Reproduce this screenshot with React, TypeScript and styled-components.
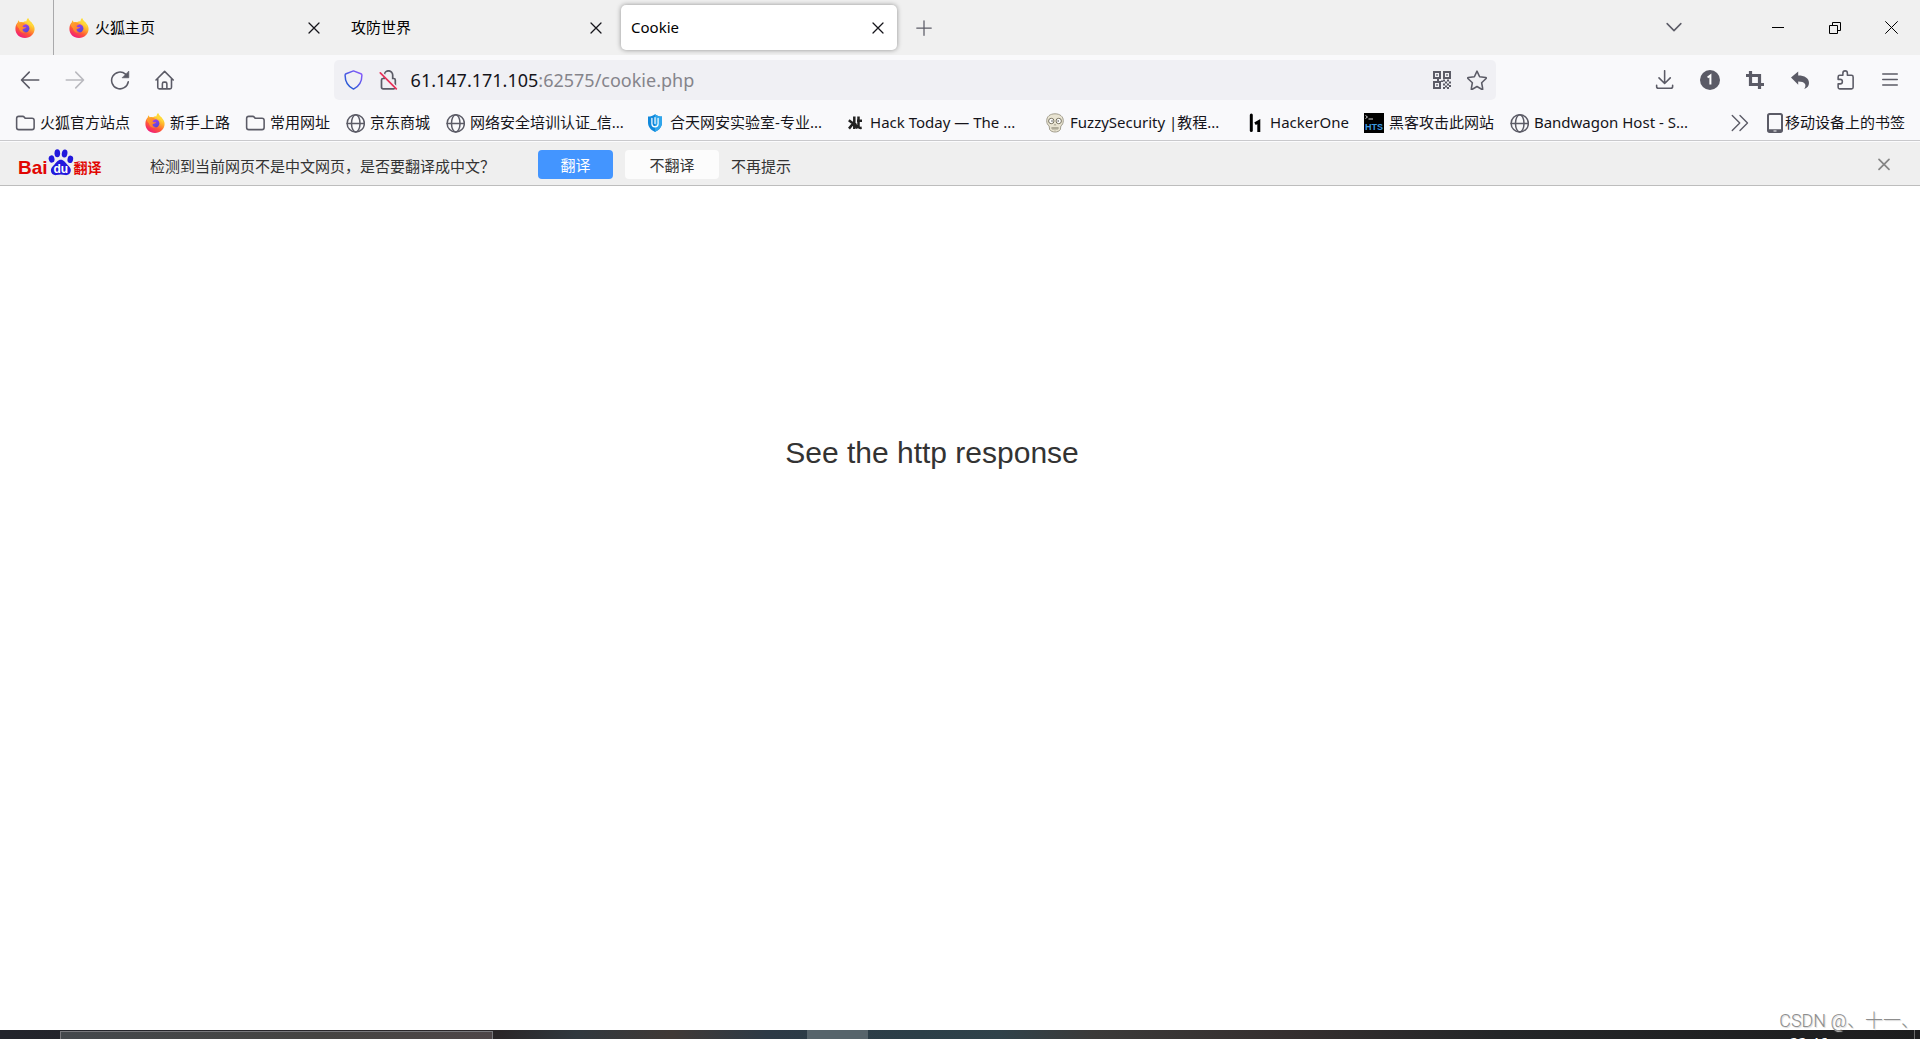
import React, { useState } from 'react';
import styled, { createGlobalStyle } from 'styled-components';

const UI_FONT = '"Noto Sans", "Noto Sans CJK SC", sans-serif';
const INK = '#15141a';
const ICON = '#5b5b66';

const GlobalStyle = createGlobalStyle`
  *, *::before, *::after { box-sizing: border-box; }
  body { margin: 0; overflow: hidden; background: #fff; font-family: ${UI_FONT}; font-size: 15px; color: ${INK}; }
  button, input { font: inherit; color: inherit; border: 0; padding: 0; margin: 0; background: none; }
  svg { display: block; flex: none; }
`;

const Window = styled.div`
  display: flex;
  flex-direction: column;
  height: 100vh;
`;

/* ---------- tab strip ---------- */

const TabStrip = styled.header`
  display: flex;
  align-items: stretch;
  height: 55px;
  background: #f0f0f0;
`;

const FirefoxView = styled.button`
  display: flex;
  align-items: center;
  padding: 0 18px 0 15px;
  border-right: 1px solid #a9a9ab;
`;

const Tab = styled.div<{ $active?: boolean }>`
  display: flex;
  align-items: center;
  flex: 0 1 276px;
  margin: 5px 3px;
  padding: 0 4px 0 ${p => (p.$active ? 10 : 12)}px;
  gap: 6px;
  border-radius: 5px;
  color: #000;
  background: ${p => (p.$active ? '#fff' : 'transparent')};
  box-shadow: ${p => (p.$active ? '0 0 5px rgba(0, 0, 0, 0.4)' : 'none')};
`;

const TabTitle = styled.span`
  flex: 1;
  padding-bottom: 2px;
  line-height: 22px;
  white-space: nowrap;
  overflow: hidden;
`;

const IconButton = styled.button<{ $w?: number; $dim?: boolean }>`
  display: flex;
  align-items: center;
  justify-content: center;
  flex: none;
  width: ${p => p.$w ?? 40}px;
  height: 40px;
  color: ${ICON};
  opacity: ${p => (p.$dim ? 0.4 : 1)};
`;

const TabClose = styled(IconButton)`
  height: 30px;
  color: ${INK};
`;

const NewTab = styled(IconButton)`
  align-self: center;
  margin-left: 4px;
`;

const WindowControls = styled.div`
  display: flex;
  align-items: center;
  margin-left: auto;
`;

const AllTabs = styled(IconButton)`
  margin-right: 55px;
`;

const CaptionButton = styled(IconButton)`
  color: #000;
`;

/* ---------- navigation bar ---------- */

const NavBar = styled.nav`
  display: flex;
  align-items: center;
  height: 50px;
  padding: 0 10px;
  background: #f9f9fb;
`;

const ButtonGroup = styled.div`
  display: flex;
  gap: 5px;
`;

const Spring = styled.div`
  flex: 149 1 0;
`;

const UrlBar = styled.form`
  display: flex;
  align-items: center;
  flex: 1162 1 0;
  height: 40px;
  padding: 0 2px;
  border-radius: 5px;
  background: #f0f0f4;
  font-size: 18px;
`;

const UrlText = styled.label`
  padding-left: 5px;
  line-height: 26px;
  color: #85848b;
  cursor: text;
`;

const UrlHost = styled.span`
  color: ${INK};
`;

const UrlInput = styled.input`
  flex: 1;
  min-width: 0;
  padding-left: 5px;
  outline: none;
`;

/* ---------- bookmarks ---------- */

const BookmarksBar = styled.div`
  display: flex;
  align-items: center;
  gap: 15px;
  height: 36px;
  padding: 0 15px;
  background: #f9f9fb;
  border-bottom: 1px solid #c9c9cc;
`;

const BookmarksShell = styled.div`
  background: #f9f9fb;
  border-bottom: 1px solid #fbfbfd;
`;

const Bookmark = styled.a<{ $tight?: boolean }>`
  display: flex;
  align-items: center;
  flex: none;
  gap: ${p => (p.$tight ? 0 : 5)}px;
  line-height: 22px;
  color: ${ICON};
  text-decoration: none;
  white-space: nowrap;
`;

const BookmarkTitle = styled.span<{ $clipped?: boolean }>`
  width: ${p => (p.$clipped ? '160px' : 'auto')};
  padding-bottom: 2px;
  color: ${INK};
`;

const Overflow = styled(IconButton)`
  height: 30px;
  margin-left: auto;
`;

/* ---------- translation bar ---------- */

const TranslateBar = styled.section`
  display: flex;
  align-items: center;
  height: 44px;
  padding: 2px 18px 0;
  background: #efefef;
  border-bottom: 1px solid #bdbdbd;
  color: #333;
  line-height: 22px;
`;

const Logo = styled.div`
  display: flex;
  align-items: flex-end;
  width: 132px;
  height: 28px;
  padding-bottom: 3px;
  color: #e10602;
  font-weight: 700;
  white-space: nowrap;
`;

const LogoLatin = styled.span`
  font: 700 19px/16px "Liberation Sans", sans-serif;
`;

const LogoHan = styled.span`
  font-size: 14px;
  line-height: 16px;
`;

const Question = styled.p`
  width: 388px;
  margin: 0;
  padding-top: 2px;
`;

const Choice = styled.button<{ $primary?: boolean }>`
  width: ${p => (p.$primary ? 75 : 94)}px;
  height: 29px;
  margin-right: 12px;
  border-radius: 4px;
  background: ${p => (p.$primary ? '#4395ff' : '#fcfcfc')};
  color: ${p => (p.$primary ? '#fff' : '#333')};
`;

const Never = styled.button`
  padding-top: 2px;
`;

const Dismiss = styled(IconButton)`
  margin-left: auto;
  margin-right: -2px;
  color: #858585;
`;

/* ---------- page ---------- */

const Page = styled.main`
  position: relative;
  flex: 1;
  padding: 248px 56px 0 0;
  background: #fff;
  text-align: center;
`;

const Message = styled.h1`
  margin: 0;
  font: 400 30px/38px "Liberation Sans", Arial, sans-serif;
  color: #333;
`;

const Watermark = styled.span`
  position: absolute;
  right: 1px;
  bottom: -3px;
  font: 300 18px/24px Roboto, "Noto Sans CJK SC", sans-serif;
  color: #8d8d8d;
  text-shadow: 1px 1px 1px #d8d8d8;
`;

const Taskbar = styled.footer`
  display: flex;
  flex: none;
  height: 9px;
  overflow: hidden;
  background: linear-gradient(90deg, #22242b 0, #2a2628 26%, #30383e 30%, #403936 35%, #2d3a46 40%, #2c3f48 48%, #30424a 52%, #3b3a39 57%, #352f2f 67%, #242628 78%, #1d1d1e 100%);
`;

const SearchBox = styled.div`
  width: 433px;
  height: 40px;
  margin: 1px 0 0 60px;
  border: 1px solid #78787c;
  background: linear-gradient(90deg, #44484c, #454442 60%, #4e4648);
`;

const RunningApp = styled.div`
  width: 61px;
  margin-left: 314px;
  background: #57646b;
`;

const Clock = styled.time`
  margin: 2px 0 0 auto;
  padding-right: 86px;
  font-size: 15px;
  line-height: 20px;
  color: #fff;
`;

const DesktopEdge = styled.div`
  width: 6px;
  border-left: 1px solid #6b6b6b;
`;

/* ---------- icons ---------- */

type StrokeProps = { children: React.ReactNode; size?: number; w?: number };

const Stroke = ({ children, size = 20, w = 1.25 }: StrokeProps) => (
  <svg width={size} height={size} viewBox="0 0 16 16" fill="none" stroke="currentColor" strokeWidth={w} strokeLinecap="round" strokeLinejoin="round" aria-hidden="true">
    {children}
  </svg>
);

const FirefoxLogo = () => (
  <svg width="20" height="20" viewBox="0 0 20 20" aria-hidden="true">
    <defs>
      <linearGradient id="fx-body" x1="0.8" y1="0.1" x2="0.3" y2="1">
        <stop offset="0" stopColor="#fff04a" />
        <stop offset="0.35" stopColor="#ffb42c" />
        <stop offset="0.65" stopColor="#ff5a36" />
        <stop offset="1" stopColor="#f0187c" />
      </linearGradient>
      <linearGradient id="fx-globe" x1="0.2" y1="0" x2="0.7" y2="1">
        <stop offset="0" stopColor="#a53df2" />
        <stop offset="1" stopColor="#5148d6" />
      </linearGradient>
      <linearGradient id="fx-head" x1="0" y1="0" x2="1" y2="1">
        <stop offset="0" stopColor="#ffa52b" />
        <stop offset="1" stopColor="#ff7130" />
      </linearGradient>
    </defs>
    <path fill="url(#fx-body)" d="M13.200.2c.4 2 1.900 2.900 3.100 4.200.4-.2.6.4.8.9 1.500 1.500 2.500 3.400 2.500 5.700 0 5-4.200 8.900-9.600 8.900C4.500 19.900.400 16 .400 10.900c0-2.600.8-5 2.300-6.500.1-.9.500-1.700 1.100-2.200.1.900.500 1.600 1.100 2 1.100-.300 2.100-.2 3 .1 1-.9 2.300-1.300 3.800-1.100-.100-1.200.400-2.400 1.500-3z" />
    <circle cx="10.200" cy="10.400" r="4.200" fill="url(#fx-globe)" />
    <path fill="url(#fx-head)" d="M1.800 7c1.200-2.200 3.600-3 6-2.200 1 .1 1.700.6 2.300 1.200-.6 1.200-1.700 1.400-2.600 1.900.2 1.200 1.700 1.500 3.700 1.200-.8 1.800-2.400 1.500-3.600 2.200-.3 1.800 1.600 3 3.600 2.600-2.700 1.900-6.900 0-7.300-3.700-.6-.3-1.600-1.900-2.100-3.200z" />
    <path fill="#ffd83a" d="M13.200.2c.4 2 1.900 2.900 3.100 4.200 1.400 1.600 1.900 3.700 1.400 5.700-.6-2-1.700-3-3-3.600-1.600-.8-3.300-1.800-3-3.300 0-1.200.4-2.300 1.500-3z" />
  </svg>
);

const Close = ({ size = 20 }: { size?: number }) => (
  <Stroke size={size} w={1}><path d="m4 4 8 8M12 4l-8 8" /></Stroke>
);

const Folder = () => (
  <Stroke><path d="M3 2.700h3.200c.6 0 .9.200 1.300.7l.6.800h5.500c1 0 1.700.7 1.700 1.700v5.700c0 1-.7 1.700-1.700 1.700H3c-1 0-1.700-.7-1.700-1.700V4.400c0-1 .7-1.700 1.700-1.700z" /></Stroke>
);

const Globe = () => (
  <Stroke w={1.2}><circle cx="8.600" cy="8.300" r="6.900" /><ellipse cx="8.600" cy="8.300" rx="3.400" ry="6.900" /><path d="M1.700 8.300h13.800" /></Stroke>
);

const ShieldUrl = () => (
  <svg width="20" height="20" viewBox="0 0 20 20" fill="none" aria-hidden="true">
    <defs>
      <linearGradient id="shield-edge" x1="0" y1="1" x2="1" y2="0">
        <stop offset="0.200" stopColor="#2b5ad6" />
        <stop offset="1" stopColor="#9059ff" />
      </linearGradient>
    </defs>
    <path d="M10.500.9 17.900 3.700c.7.300 1 .8 1 1.500 0 6.400-2.500 11-8.400 13.900C4.600 16.200 2.100 11.600 2.100 5.200c0-.7.3-1.200 1-1.500z" stroke="url(#shield-edge)" strokeWidth="1.500" strokeLinejoin="round" />
  </svg>
);

const LockOff = () => (
  <svg width="20" height="20" viewBox="0 0 20 20" fill="none" strokeWidth="1.700" strokeLinecap="round" aria-hidden="true">
    <path d="M6.300 8V5a4.200 4.200 0 0 1 8.400 0V8.500h1c1 0 1.600.6 1.600 1.600v7.200c0 1-.6 1.600-1.600 1.600H5.100c-1 0-1.600-.6-1.600-1.600v-7.200c0-1 .6-1.600 1.600-1.600h1.200" stroke={ICON} />
    <path d="m3.600 2.900 15 15" stroke="#f0f0f4" strokeWidth="2.600" />
    <path d="m2.300 2.800 16 16" stroke="#e8305a" />
  </svg>
);

const QrCode = () => (
  <svg width="18" height="18" viewBox="0 0 18 18" fill={ICON} aria-hidden="true">
    <path fillRule="evenodd" d="M0 0h8v8H0zM2 2v4h4V2zM10 0h8v8h-8zM12 2v4h4V2zM0 10h8v8H0zM2 12v4h4v-4z" />
    <path d="M3.200 3.200h1.600v1.600H3.200zM13.200 3.200h1.600v1.600h-1.600zM3.200 13.200h1.600v1.600H3.200zM4 8h2v2H4zM10 8.500h2v2h-2zM14 8.500h2v2h-2zM12 10.500h2v2h-2zM16 10.500h2v2h-2zM10 12.500h2v2h-2zM14 12.500h2v2h-2zM12 14.500h2v2h-2zM16 14h2v2h-2zM10 16h2v2h-2zM14 16h2v2h-2zM8 9.500h2v1.500H8z" />
  </svg>
);

const HeTianShield = () => (
  <svg width="20" height="20" viewBox="0 0 20 20" aria-hidden="true">
    <path fill="#1089dc" d="M10 1.200c2 1.400 4.300 2.200 7 2.400v5.900c0 4.200-2.600 7.400-7 9.400-4.400-2-7-5.200-7-9.400V3.600c2.700-.2 5-1 7-2.400z" />
    <path fill="#2fa6ec" d="M10 1.200c2 1.400 4.300 2.200 7 2.400v5.900c0 4.200-2.600 7.400-7 9.400z" />
    <path fill="none" stroke="#fff" strokeWidth="1.200" strokeLinecap="round" d="M6.900 5.300v5.500c0 1.800 1.200 3 3.100 3s3.100-1.200 3.100-3V5.300M10 4.600v5.800" />
  </svg>
);

const HackToday = () => (
  <svg width="20" height="20" viewBox="0 0 20 20" fill="none" stroke="#222" strokeWidth="2.500" aria-hidden="true">
    <path d="M9.300 3.500V16M8.800 11 3.800 7.200M8.300 10.300 4 15.600M13.500 3.500v9.700c0 1.400 1 1.900 3.200 1.600M12 7.800h5M10 10.500l2.400 5" />
  </svg>
);

const Skull = () => (
  <svg width="20" height="20" viewBox="0 0 20 20" aria-hidden="true">
    <path fill="#e9e4d2" stroke="#8f8a78" strokeWidth="0.800" d="M10 .8c5 0 8.300 2.700 8.300 6.900 0 2.400-.8 4.200-2.400 5.200l-.6 3.800c-1.300 1.600-3 2.300-5.300 2.300s-4-.7-5.300-2.300l-.6-3.800C2.500 11.900 1.700 10.100 1.700 7.700 1.700 3.500 5 .8 10 .8z" />
    <circle cx="6.300" cy="8" r="2.700" fill="#fff" stroke="#77725f" />
    <circle cx="13.700" cy="8" r="2.700" fill="#fff" stroke="#77725f" />
    <circle cx="7" cy="8" r="0.800" fill="#555" /><circle cx="13.200" cy="8" r="0.800" fill="#555" />
    <path stroke="#8f8a78" strokeWidth="0.800" fill="none" d="m9.200 12.500.8-1.300.8 1.300M6 15h8M8 14v3M10 14v3.500M12 14v3" />
  </svg>
);

const HackerOne = () => (
  <svg width="20" height="20" viewBox="0 0 20 20" fill="none" stroke="#000" strokeWidth="3" aria-hidden="true">
    <path strokeLinecap="round" d="M6.300 2v15.500" /><path d="M13.800 19V8.600L10 10.800" />
  </svg>
);

const HtsLogo = () => (
  <svg width="20" height="20" viewBox="0 0 20 20" aria-hidden="true">
    <path fill="#000" d="M0 0h20v20H0z" />
    <path fill="none" stroke="#d5d5d5" strokeWidth="1" d="m1.500 2.500 2 1.500-2 1.500M4.500 6H9" />
    <text x="10" y="17" fill="#3d9be0" fontFamily="Liberation Sans, sans-serif" fontWeight="700" fontSize="9" textAnchor="middle">HTS</text>
  </svg>
);

const Tablet = () => (
  <svg width="20" height="20" viewBox="0 0 20 20" aria-hidden="true">
    <path fill={ICON} fillRule="evenodd" d="M4.500 0h11C17 0 18 1 18 2.500v15c0 1.500-1 2.500-2.500 2.500h-11C3 20 2 19 2 17.500v-15C2 1 3 0 4.500 0zM4.800 2c-.5 0-.8.300-.8.800v13.400h12V2.800c0-.5-.3-.8-.8-.8zM8.500 17.500v1h3v-1z" />
  </svg>
);

const Paw = () => (
  <svg width="26" height="27" viewBox="0 0 26 27" fill="#2319dc" aria-hidden="true">
    <ellipse cx="3.600" cy="10" rx="2.900" ry="3.700" transform="rotate(-12 3.600 10)" />
    <ellipse cx="9.300" cy="4.300" rx="2.800" ry="4" />
    <ellipse cx="16.600" cy="4.500" rx="2.800" ry="4" transform="rotate(10 16.600 4.500)" />
    <ellipse cx="22.300" cy="10.300" rx="2.800" ry="3.700" transform="rotate(12 22.300 10.300)" />
    <path d="M12.800 10.800c3 0 4.200 2.600 6.300 4.600 2.200 2 4 3.700 3.700 6.400-.3 3-2.500 4.600-5.600 4.300-1.500-.2-2.900-.5-4.400-.5s-2.900.4-4.400.5c-3.100.3-5.300-1.300-5.500-4.300-.2-2.700 1.500-4.400 3.600-6.400 2.100-2 3.300-4.600 6.300-4.600z" />
    <text x="12.800" y="24" fill="#fff" fontFamily="Liberation Sans, sans-serif" fontWeight="700" fontSize="12" textAnchor="middle">du</text>
  </svg>
);

/* ---------- data ---------- */

const tabs = [
  { title: '火狐主页', icon: <FirefoxLogo /> },
  { title: '攻防世界' },
  { title: 'Cookie', active: true },
];

const bookmarks = [
  { title: '火狐官方站点', icon: <Folder /> },
  { title: '新手上路', icon: <FirefoxLogo /> },
  { title: '常用网址', icon: <Folder /> },
  { title: '京东商城', icon: <Globe /> },
  { title: '网络安全培训认证_信...', icon: <Globe />, clipped: true },
  { title: '合天网安实验室-专业...', icon: <HeTianShield />, clipped: true },
  { title: 'Hack Today — The ...', icon: <HackToday />, clipped: true },
  { title: 'FuzzySecurity |教程...', icon: <Skull />, clipped: true },
  { title: 'HackerOne', icon: <HackerOne /> },
  { title: '黑客攻击此网站', icon: <HtsLogo /> },
  { title: 'Bandwagon Host - S...', icon: <Globe />, clipped: true },
];

const AddressBar = () => {
  const [editing, setEditing] = useState(false);
  const [url, setUrl] = useState('61.147.171.105:62575/cookie.php');
  const cut = url.indexOf(':');
  return (
    <UrlBar onSubmit={e => e.preventDefault()}>
      <IconButton type="button" $w={35} aria-label="跟踪保护"><ShieldUrl /></IconButton>
      <IconButton type="button" $w={35} aria-label="连接不安全"><LockOff /></IconButton>
      {!editing && (
        <UrlText htmlFor="address">
          <UrlHost>{url.slice(0, cut)}</UrlHost>{url.slice(cut)}
        </UrlText>
      )}
      <UrlInput
        id="address"
        aria-label="地址"
        value={editing ? url : ''}
        onFocus={() => setEditing(true)}
        onBlur={() => setEditing(false)}
        onChange={e => setUrl(e.target.value)}
      />
      <IconButton type="button" $w={35} aria-label="二维码"><QrCode /></IconButton>
      <IconButton type="button" $w={35} aria-label="添加书签">
        <Stroke><path d="m8 .9 2.100 4.500 4.900.6c.4.100.6.500.3.800l-3.600 3.400.9 4.900c.1.400-.3.700-.6.500L8 13.200l-4 2.400c-.3.200-.7-.1-.6-.5l.9-4.900L.700 6.800c-.3-.3-.1-.7.3-.8l4.900-.6z" /></Stroke>
      </IconButton>
    </UrlBar>
  );
};

export default function App() {
  return (
    <Window>
      <GlobalStyle />
      <TabStrip>
        <FirefoxView aria-label="Firefox View"><FirefoxLogo /></FirefoxView>
        {tabs.map(t => (
          <Tab key={t.title} $active={t.active}>
            {t.icon}
            <TabTitle>{t.title}</TabTitle>
            <TabClose $w={30} aria-label="关闭标签页"><Close /></TabClose>
          </Tab>
        ))}
        <NewTab aria-label="新建标签页"><Stroke w={1}><path d="M8 2.200v11.600M2.200 8h11.600" /></Stroke></NewTab>
        <WindowControls>
          <AllTabs aria-label="列出所有标签页"><Stroke w={1.2}><path d="m2.500 4.500 5.500 5.600 5.500-5.600" /></Stroke></AllTabs>
          <CaptionButton $w={57} aria-label="最小化">
            <svg width="12" height="12" viewBox="0 0 12 12"><path d="M0 5h12v1H0z" /></svg>
          </CaptionButton>
          <CaptionButton $w={57} aria-label="还原">
            <svg width="12" height="12" viewBox="0 0 12 12" fill="none" stroke="#000"><path d="M.5 3.500h8v8h-8zM3.500 3.500v-3h8v8h-3" /></svg>
          </CaptionButton>
          <CaptionButton $w={57} aria-label="关闭">
            <svg width="13" height="13" viewBox="0 0 13 13" stroke="#000"><path d="m.300.300 12.400 12.400M12.700.300.300 12.700" /></svg>
          </CaptionButton>
        </WindowControls>
      </TabStrip>

      <NavBar>
        <ButtonGroup>
          <IconButton aria-label="后退"><Stroke><path d="M15 8H1.300M7.400 1.700 1.200 8l6.200 6.300" /></Stroke></IconButton>
          <IconButton aria-label="前进" $dim><Stroke><path d="M1 8h13.700M8.600 1.700 14.800 8l-6.200 6.300" /></Stroke></IconButton>
          <IconButton aria-label="刷新">
            <Stroke><path d="M14.600 9.500A6.700 6.700 0 1 1 12.400 3.300" /><path d="M15 1.200v5h-5z" fill="currentColor" strokeWidth="0.600" /></Stroke>
          </IconButton>
          <IconButton aria-label="主页">
            <Stroke><path d="M.8 8 7.700 1.100 14.600 8M2.200 6.800v7c0 .8.500 1.300 1.300 1.300h8.400c.8 0 1.300-.5 1.300-1.300v-7M5.900 15v-4c0-.8.500-1.300 1.300-1.300h1c.8 0 1.300.5 1.300 1.300v4" /></Stroke>
          </IconButton>
        </ButtonGroup>
        <Spring />
        <AddressBar />
        <Spring />
        <ButtonGroup>
          <IconButton aria-label="下载"><Stroke><path d="M7.700.6v10M3.200 6.300l4.500 4.500 4.500-4.500M1.300 12.200v.9c0 .9.600 1.500 1.500 1.500h9.800c.9 0 1.500-.6 1.500-1.500v-.9" /></Stroke></IconButton>
          <IconButton aria-label="容器">
            <svg width="20" height="20" viewBox="0 0 20 20" fill="none"><circle cx="10" cy="10" r="10" fill={ICON} /><path d="m7.600 7.500 2.800-2v9" stroke="#fff" strokeWidth="2" /></svg>
          </IconButton>
          <IconButton aria-label="截图">
            <svg width="18" height="18" viewBox="0 0 18 18" fill="none" stroke="currentColor" strokeWidth="3.200"><path d="M4.500 0v13.500H18M0 4.500h13.500V18" /></svg>
          </IconButton>
          <IconButton aria-label="撤销">
            <svg width="18" height="18" viewBox="0 0 18 18" fill="currentColor"><path d="M0 6.500 7.200.500v4c6.400 0 10.800 2.600 10.800 7.400 0 2.900-1.700 4.900-4.800 6.100 2.900-4.100.8-7.400-6-7.400v3.200z" /></svg>
          </IconButton>
          <IconButton aria-label="扩展">
            <Stroke><path d="M5.300 4.200h1V2.500a1.800 1.800 0 0 1 3.600 0v1.700h3.300c.8 0 1.300.5 1.300 1.300v8.300c0 .8-.5 1.300-1.300 1.300H3.800c-.8 0-1.300-.5-1.300-1.300v-2.700h1.600a1.800 1.800 0 0 0 0-3.600H2.500V5.500c0-.8.500-1.300 1.300-1.300z" /></Stroke>
          </IconButton>
          <IconButton aria-label="菜单"><Stroke w={1.2}><path d="M2.200 3.200h11.600M2.200 7.600h11.600M2.200 12h11.600" /></Stroke></IconButton>
        </ButtonGroup>
      </NavBar>

      <BookmarksShell>
        <BookmarksBar>
          {bookmarks.map(b => (
            <Bookmark key={b.title} href="#">
              {b.icon}
              <BookmarkTitle $clipped={b.clipped}>{b.title}</BookmarkTitle>
            </Bookmark>
          ))}
          <Overflow $w={20} aria-label="更多书签"><Stroke w={1.1}><path d="m1.800 2 6 6-6 6M8 2l6 6-6 6" /></Stroke></Overflow>
          <Bookmark href="#" $tight>
            <Tablet />
            <BookmarkTitle>移动设备上的书签</BookmarkTitle>
          </Bookmark>
        </BookmarksBar>
      </BookmarksShell>

      <TranslateBar>
        <Logo><LogoLatin>Bai</LogoLatin><Paw /><LogoHan>翻译</LogoHan></Logo>
        <Question>检测到当前网页不是中文网页，是否要翻译成中文？</Question>
        <Choice $primary>翻译</Choice>
        <Choice>不翻译</Choice>
        <Never>不再提示</Never>
        <Dismiss aria-label="关闭翻译栏"><Stroke w={1.4}><path d="m4 3.500 8 8M12 3.500l-8 8" /></Stroke></Dismiss>
      </TranslateBar>

      <Page>
        <Message>See the http response</Message>
        <Watermark>CSDN @、十一、</Watermark>
      </Page>

      <Taskbar>
        <SearchBox />
        <RunningApp />
        <Clock>22:46</Clock>
        <DesktopEdge />
      </Taskbar>
    </Window>
  );
}
